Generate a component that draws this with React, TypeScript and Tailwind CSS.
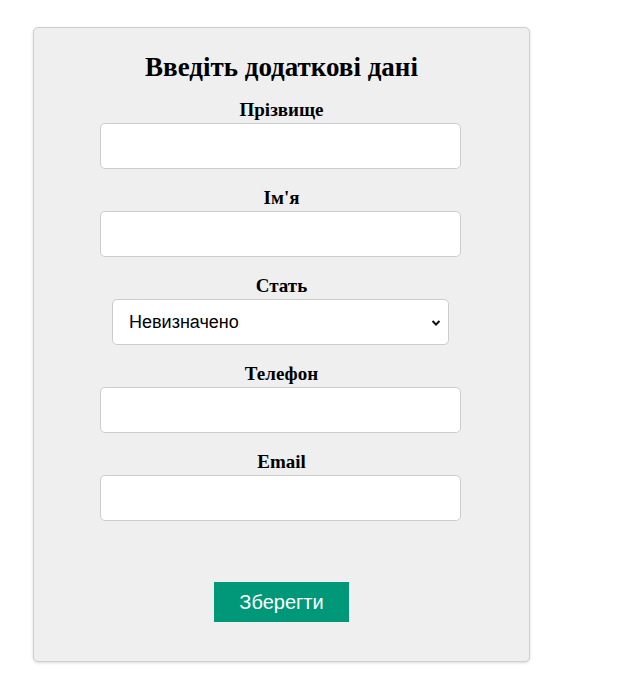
export default function App() {
  const fields = [
    { label: "Прізвище", type: "text" },
    { label: "Ім'я", type: "text" },
    { label: "Стать", type: "select" },
    { label: "Телефон", type: "tel" },
    { label: "Email", type: "email" },
  ];

  return (
    <div className="min-h-screen bg-white pt-[27px] pl-[33px]">
      <div className="w-[497px] h-[635px] bg-[#efefef] border border-[#cfcfcf] rounded-[5px] shadow-[0_1px_3px_rgba(0,0,0,0.15)] flex flex-col items-center pt-[21px]">
        <h2 className="font-['Liberation_Serif',serif] font-bold text-[27px] leading-[36px] text-black mb-[15px]">
          Введіть додаткові дані
        </h2>

        {fields.map((f) => (
          <div key={f.label} className="flex flex-col items-center mb-[19px]">
            <label className="font-['Liberation_Serif',serif] font-bold text-[19px] leading-[20px] text-black mb-[3px]">
              {f.label}
            </label>
            {f.type === "select" ? (
              <div className="relative w-[337px] h-[46px] -translate-x-px">
                <select
                  defaultValue="none"
                  className="appearance-none w-full h-full bg-white border border-[#cccccc] rounded-[5px] pl-[16px] font-['Liberation_Sans',Arial,sans-serif] text-[18px] text-black outline-none"
                >
                  <option value="none">Невизначено</option>
                  <option value="m">Чоловіча</option>
                  <option value="f">Жіноча</option>
                </select>
                <svg
                  className="absolute right-[8px] top-[20px] pointer-events-none"
                  width="10"
                  height="8"
                  viewBox="0 0 10 8"
                >
                  <path d="M1.5 2 L5 5.5 L8.5 2" stroke="#111" strokeWidth="2" fill="none" />
                </svg>
              </div>
            ) : (
              <input
                type={f.type}
                className="w-[361px] h-[46px] bg-white border border-[#cccccc] rounded-[5px] px-3 outline-none -translate-x-px"
              />
            )}
          </div>
        ))}

        <button className="mt-[42px] w-[135px] h-[40px] bg-[#009879] text-white font-['Liberation_Sans',Arial,sans-serif] text-[20px]">
          Зберегти
        </button>
      </div>
    </div>
  );
}
